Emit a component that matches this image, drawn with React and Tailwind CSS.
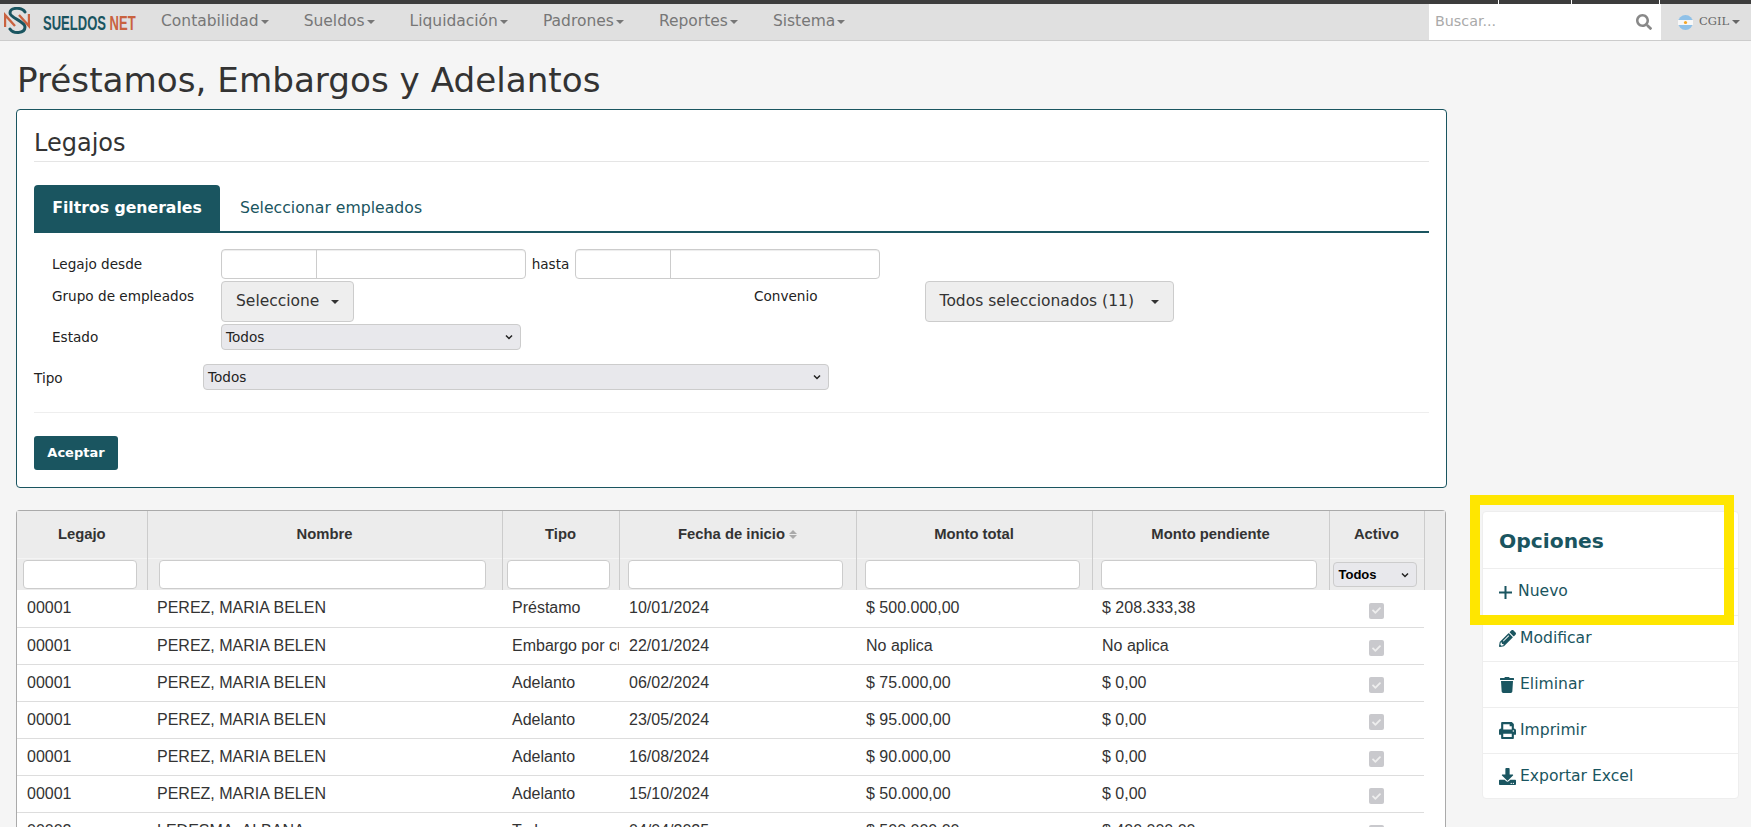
import { FaSearch, FaPencilAlt, FaTrash, FaPrint, FaDownload, FaCheck } from 'react-icons/fa'

const NAV_ITEMS = ['Contabilidad', 'Sueldos', 'Liquidación', 'Padrones', 'Reportes', 'Sistema']

const ROWS = [
  ['00001', 'PEREZ, MARIA BELEN', 'Préstamo', '10/01/2024', '$ 500.000,00', '$ 208.333,38'],
  ['00001', 'PEREZ, MARIA BELEN', 'Embargo por cuota', '22/01/2024', 'No aplica', 'No aplica'],
  ['00001', 'PEREZ, MARIA BELEN', 'Adelanto', '06/02/2024', '$ 75.000,00', '$ 0,00'],
  ['00001', 'PEREZ, MARIA BELEN', 'Adelanto', '23/05/2024', '$ 95.000,00', '$ 0,00'],
  ['00001', 'PEREZ, MARIA BELEN', 'Adelanto', '16/08/2024', '$ 90.000,00', '$ 0,00'],
  ['00001', 'PEREZ, MARIA BELEN', 'Adelanto', '15/10/2024', '$ 50.000,00', '$ 0,00'],
  ['00002', 'LEDESMA, ALBANA', 'Todos', '04/04/2025', '$ 500.000,00', '$ 400.000,00'],
]

const PlusIcon = () => (
  <svg width="13" height="13" viewBox="0 0 13 13" stroke="currentColor" strokeWidth="2" className="mr-[6px] shrink-0">
    <path d="M6.5 0v13M0 6.5h13" />
  </svg>
)

const OPTIONS = [
  { label: 'Nuevo', height: 'h-[47px]', icon: <PlusIcon /> },
  { label: 'Modificar', height: 'h-[46px]', icon: <FaPencilAlt className="text-[17px] mr-[4px]" /> },
  { label: 'Eliminar', height: 'h-[46px]', icon: <FaTrash className="text-[16px] mr-[5px]" /> },
  { label: 'Imprimir', height: 'h-[46px]', icon: <FaPrint className="text-[17px] mr-[4px]" /> },
  { label: 'Exportar Excel', height: 'h-[46px]', icon: <FaDownload className="text-[17px] mr-[4px]" /> },
]

// Logo: S with two orange arrows behind
const Logo = () => (
  <svg width="26" height="30" viewBox="0 0 26 30" fill="none" className="shrink-0">
    <path d="M1 20V8l10 11" stroke="#c9623f" strokeWidth="2.4" />
    <path d="M25 7v12L15 8" stroke="#c9623f" strokeWidth="2.4" />
    <path d="M21 5C18 0 6 0 6 6c0 5 15 8 15 14 0 7-12 7-15 2" stroke="#1a5560" strokeWidth="3" strokeLinecap="round" />
  </svg>
)

const Flag = () => (
  <svg width="15" height="15" viewBox="0 0 15 15" className="shrink-0">
    <circle cx="7.5" cy="7.5" r="7.5" fill="#8fc1e8" />
    <rect x="0" y="5" width="15" height="5" fill="#f7f7f7" />
    <circle cx="7.5" cy="7.5" r="1.6" fill="#f5a623" />
  </svg>
)

const Caret = ({ className = '' }) => (
  <span className={`inline-block w-0 h-0 border-x-[4px] border-x-transparent border-t-[4px] border-t-current ${className}`} />
)

const Chevron = () => (
  <svg width="10" height="10" viewBox="0 0 10 10" fill="none" stroke="#222" strokeWidth="1.5" className="shrink-0">
    <path d="M2 3.5l3 3 3-3" />
  </svg>
)

const SelectBox = ({ className = '' }) => (
  <div className={`flex items-center justify-between h-[26px] pl-[4px] pr-[6px] bg-[#e8e8ec] border border-[#ccc] rounded-[4px] text-[13.6px] text-[#222] ${className}`}>
    <span>Todos</span>
    <Chevron />
  </div>
)

const SplitInput = () => (
  <div className="flex w-[305px] h-[30px] bg-white border border-[#ccc] rounded-[4px] shadow-[inset_0_1px_1px_rgba(0,0,0,0.075)]">
    <div className="w-[95px] border-r border-[#ccc]" />
  </div>
)

const DropdownButton = ({ label, className = '' }) => (
  <button type="button" className={`flex items-center justify-between h-[41px] px-[14px] bg-[#eee] border border-[#ccc] rounded-[4px] text-[15.5px] text-[#333] ${className}`}>
    <span>{label}</span>
    <Caret className="text-[#333]" />
  </button>
)

const HeaderCell = ({ label, children, sort = false }) => (
  <th className="h-[79px] p-0 align-top font-bold text-[14.8px] text-[#333] bg-[#ececec] border-r border-[#ccc]">
    <div className="h-[47px] flex items-center justify-center gap-[4px]">
      {label}
      {sort && (
        <span className="flex flex-col gap-[1px]">
          <Caret className="rotate-180 text-[#aaa]" />
          <Caret className="text-[#aaa]" />
        </span>
      )}
    </div>
    <div className="h-[32px] border-t border-[#f4f4f4] pt-[1px] pr-[4px] flex justify-center">{children}</div>
  </th>
)

const FilterInput = ({ className = '' }) => (
  <div className={`h-[29px] bg-white border border-[#ccc] rounded-[4px] ${className}`} />
)

const Checked = () => (
  <span className="inline-flex items-center justify-center w-[15px] h-[16px] translate-y-[2px] rounded-[2px] bg-[#c9c9cd] text-[#eee]">
    <FaCheck className="text-[9px]" />
  </span>
)

export default function App() {
  return (
    <div className="h-screen overflow-hidden bg-[#f5f5f5] text-[#333] font-['DejaVu_Sans',sans-serif]">
      {/* top strip */}
      <div className="h-[4px] bg-[#3d3d3d] flex">
        <div className="w-[1499px] border-r border-white" />
        <div className="w-[73px] border-r border-white" />
        <div className="w-[88px] border-r border-white" />
      </div>

      {/* navbar */}
      <nav className="h-[37px] flex bg-[#e0e0e0] border-b border-[#ccc]">
        <div className="w-[161px] shrink-0 flex items-center pl-[4px]">
          <Logo />
          <span className="ml-[13px] origin-left scale-x-[0.62] whitespace-nowrap font-['Liberation_Sans',sans-serif] font-bold text-[21px] leading-none text-[#1a5560]">
            SUELDOS <span className="text-[#c9623f]">NET</span>
          </span>
        </div>
        <div className="flex flex-1 items-center gap-[35px]">
          {NAV_ITEMS.map((item) => (
            <span key={item} className="flex items-center gap-[2px] text-[15.5px] text-[#777]">
              {item}
              <Caret />
            </span>
          ))}
        </div>
        <div className="w-[232px] h-[36px] bg-white flex items-center justify-between pl-[6px] pr-[9px] text-[14.3px] text-[#aaa]">
          <span>Buscar...</span>
          <FaSearch className="text-[16px] text-[#888]" />
        </div>
        <div className="w-[90px] flex items-center pl-[17px] text-[11.5px] text-[#666] font-['DejaVu_Serif',serif]">
          <Flag />
          <span className="ml-[6px]">CGIL</span>
          <Caret className="ml-[3px]" />
        </div>
      </nav>

      <div className="flex">
        <main className="w-[1447px] shrink-0 pl-[16px]">
          <h1 className="mt-[16px] mb-[6px] pl-[1px] text-[34.2px] leading-[46px] font-normal text-[#333]">
            Préstamos, Embargos y Adelantos
          </h1>

          {/* filter card */}
          <section className="h-[379px] px-[17px] pt-[20px] bg-white border border-[#1a5560] rounded-[4px]">
            <h2 className="h-[32px] pb-[6px] border-b border-[#e5e5e5] text-[24px] leading-[26px] font-normal text-[#333]">Legajos</h2>

            <div className="mt-[23px] h-[48px] flex border-b-2 border-[#1a5560]">
              <button type="button" className="w-[186px] bg-[#1a5560] rounded-t-[4px] text-[15.7px] font-bold text-white">Filtros generales</button>
              <button type="button" className="ml-[20px] text-[15.7px] text-[#1a5560]">Seleccionar empleados</button>
            </div>

            <div className="mt-[16px] text-[13.6px] text-[#222]">
              <div className="flex items-center">
                <span className="ml-[18px] w-[169px]">Legajo desde</span>
                <SplitInput />
                <span className="w-[49px] text-center">hasta</span>
                <SplitInput />
              </div>
              <div className="mt-[2px] flex items-start">
                <span className="ml-[18px] w-[169px] mt-[5px]">Grupo de empleados</span>
                <DropdownButton label="Seleccione" className="w-[133px]" />
                <span className="ml-[400px] mt-[5px]">Convenio</span>
                <DropdownButton label="Todos seleccionados (11)" className="ml-[107px] w-[249px]" />
              </div>
              <div className="mt-[2px] flex items-center">
                <span className="ml-[18px] w-[169px]">Estado</span>
                <SelectBox className="w-[300px]" />
              </div>
              <div className="mt-[14px] flex items-center">
                <span className="w-[169px] translate-y-[1px]">Tipo</span>
                <SelectBox className="w-[626px]" />
              </div>
            </div>

            <div className="mt-[22px] border-t border-[#eee]" />
            <button type="button" className="mt-[23px] w-[84px] h-[34px] bg-[#1a5560] rounded-[3px] text-[13px] font-bold text-white">Aceptar</button>
          </section>

          {/* data table */}
          <div className="mt-[22px] mr-[1px] border-x border-t border-[#aaa] rounded-t-[4px] bg-white">
            <table className="w-full table-fixed border-collapse font-['Liberation_Sans',sans-serif] text-[16px]">
              <colgroup>
                <col className="w-[130px]" />
                <col className="w-[355px]" />
                <col className="w-[117px]" />
                <col className="w-[237px]" />
                <col className="w-[236px]" />
                <col className="w-[237px]" />
                <col className="w-[95px]" />
                <col />
              </colgroup>
              <thead>
                <tr>
                  <HeaderCell label="Legajo"><FilterInput className="w-[114px]" /></HeaderCell>
                  <HeaderCell label="Nombre"><FilterInput className="w-[327px]" /></HeaderCell>
                  <HeaderCell label="Tipo"><FilterInput className="w-[103px]" /></HeaderCell>
                  <HeaderCell label="Fecha de inicio" sort><FilterInput className="w-[215px]" /></HeaderCell>
                  <HeaderCell label="Monto total"><FilterInput className="w-[215px]" /></HeaderCell>
                  <HeaderCell label="Monto pendiente"><FilterInput className="w-[216px]" /></HeaderCell>
                  <HeaderCell label="Activo">
                    <div className="mt-[2px] w-[84px] h-[25px] flex items-center justify-between pl-[5px] pr-[6px] bg-[#e8e8ec] border border-[#ccc] rounded-[4px] text-[13px] text-black">
                      <span>Todos</span>
                      <Chevron />
                    </div>
                  </HeaderCell>
                  <th className="p-0 bg-[#ececec]" />
                </tr>
              </thead>
              <tbody>
                {ROWS.map((row, i) => (
                  <tr key={i} className="h-[37px]">
                    {row.map((cell, j) => (
                      <td key={j} className="p-0 pl-[10px] overflow-hidden whitespace-nowrap text-[#333] border-b border-[#ddd]">{cell}</td>
                    ))}
                    <td className="p-0 text-center border-b border-[#ddd]"><Checked /></td>
                  </tr>
                ))}
              </tbody>
            </table>
          </div>
        </main>

        {/* options panel */}
        <aside className="relative ml-[35px] mt-[470px] w-[257px] h-[288px] bg-white border border-[#eee] rounded-[4px] text-[#1a5560] self-start">
          <h3 className="h-[56px] pl-[16px] flex items-center text-[20.3px] font-bold translate-y-[1px]">Opciones</h3>
          {OPTIONS.map(({ label, height, icon }) => (
            <div key={label} className={`${height} pl-[16px] flex items-center border-t border-[#eee] text-[15.6px]`}>
              {icon}
              {label}
            </div>
          ))}
          {/* highlight box */}
          <div className="absolute -left-[13px] -top-[17px] w-[264px] h-[130px] border-[10px] border-[#ffe600]" />
        </aside>
      </div>
    </div>
  )
}
